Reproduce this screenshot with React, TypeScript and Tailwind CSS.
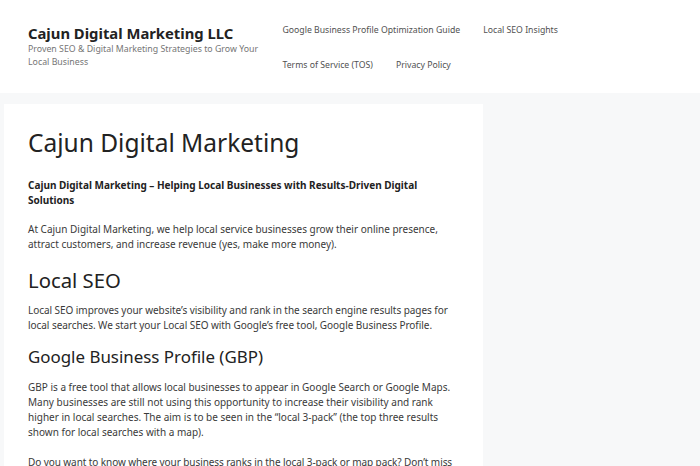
import React from "react";

const navRows = [
  ["Google Business Profile Optimization Guide", "Local SEO Insights"],
  ["Terms of Service (TOS)", "Privacy Policy"],
];

function Header() {
  return (
    <header className="bg-white h-[93px] flex items-center pl-[28px]">
      <div className="w-[243px] shrink-0 self-start mt-[23px]">
        <p className="text-[14.8px] leading-[20px] font-bold text-[#222222]">
          Cajun Digital Marketing LLC
        </p>
        <p className="text-[8.8px] leading-[13px] text-[#757575]">
          Proven SEO &amp; Digital Marketing Strategies to Grow Your Local Business
        </p>
      </div>
      <nav className="flex flex-col pt-[2px]">
        {navRows.map((row, i) => (
          <ul key={i} className="flex">
            {row.map((item) => (
              <li
                key={item}
                className="px-[11.5px] leading-[35px] text-[8.7px] text-[#515151]"
              >
                {item}
              </li>
            ))}
          </ul>
        ))}
      </nav>
    </header>
  );
}

export default function App() {
  return (
    <div
      className="h-[466px] overflow-hidden bg-[#f7f8f9] text-[#3a3a3a]"
      style={{ fontFamily: "'Noto Sans', 'Open Sans', sans-serif" }}
    >
      <Header />
      <main className="flex gap-[10px] pt-[11px] pl-[4px]">
        <article className="w-[479px] bg-white px-[24px] pt-[21px] pb-[24px] text-[10px] leading-[15px]">
          <h1 className="text-[24.5px] leading-[36px] text-[#222222] mb-[16.5px]">
            Cajun Digital Marketing
          </h1>
          <p className="font-bold text-[#222222] mb-[14px]">
            Cajun Digital Marketing – Helping Local Businesses with Results-Driven Digital
            Solutions
          </p>
          <p className="mb-[14px]">
            At Cajun Digital Marketing, we help local service businesses grow their online
            presence, attract customers, and increase revenue (yes, make more money).
          </p>
          <h2 className="text-[20.3px] leading-[28px] text-[#222222] mb-[9px]">Local SEO</h2>
          <p className="tracking-[-0.05px] mb-[12.5px]">
            Local SEO improves your website’s visibility and rank in the search engine
            results pages for local searches. We start your Local SEO with Google’s free
            tool, Google Business Profile.
          </p>
          <h3 className="text-[16.9px] leading-[24px] text-[#222222] mb-[10.5px]">
            Google Business Profile (GBP)
          </h3>
          <p className="mb-[15px]">
            GBP is a free tool that allows local businesses to appear in Google Search or
            Google Maps. Many businesses are still not using this opportunity to increase
            their visibility and rank higher in local searches. The aim is to be seen in the
            “local 3-pack” (the top three results shown for local searches with a map).
          </p>
          <p className="tracking-[-0.08px]">
            Do you want to know where your business ranks in the local 3-pack or map pack?
            Don’t miss out on customers who are searching for your services right now.
          </p>
        </article>
        <aside className="flex-1" />
      </main>
    </div>
  );
}
